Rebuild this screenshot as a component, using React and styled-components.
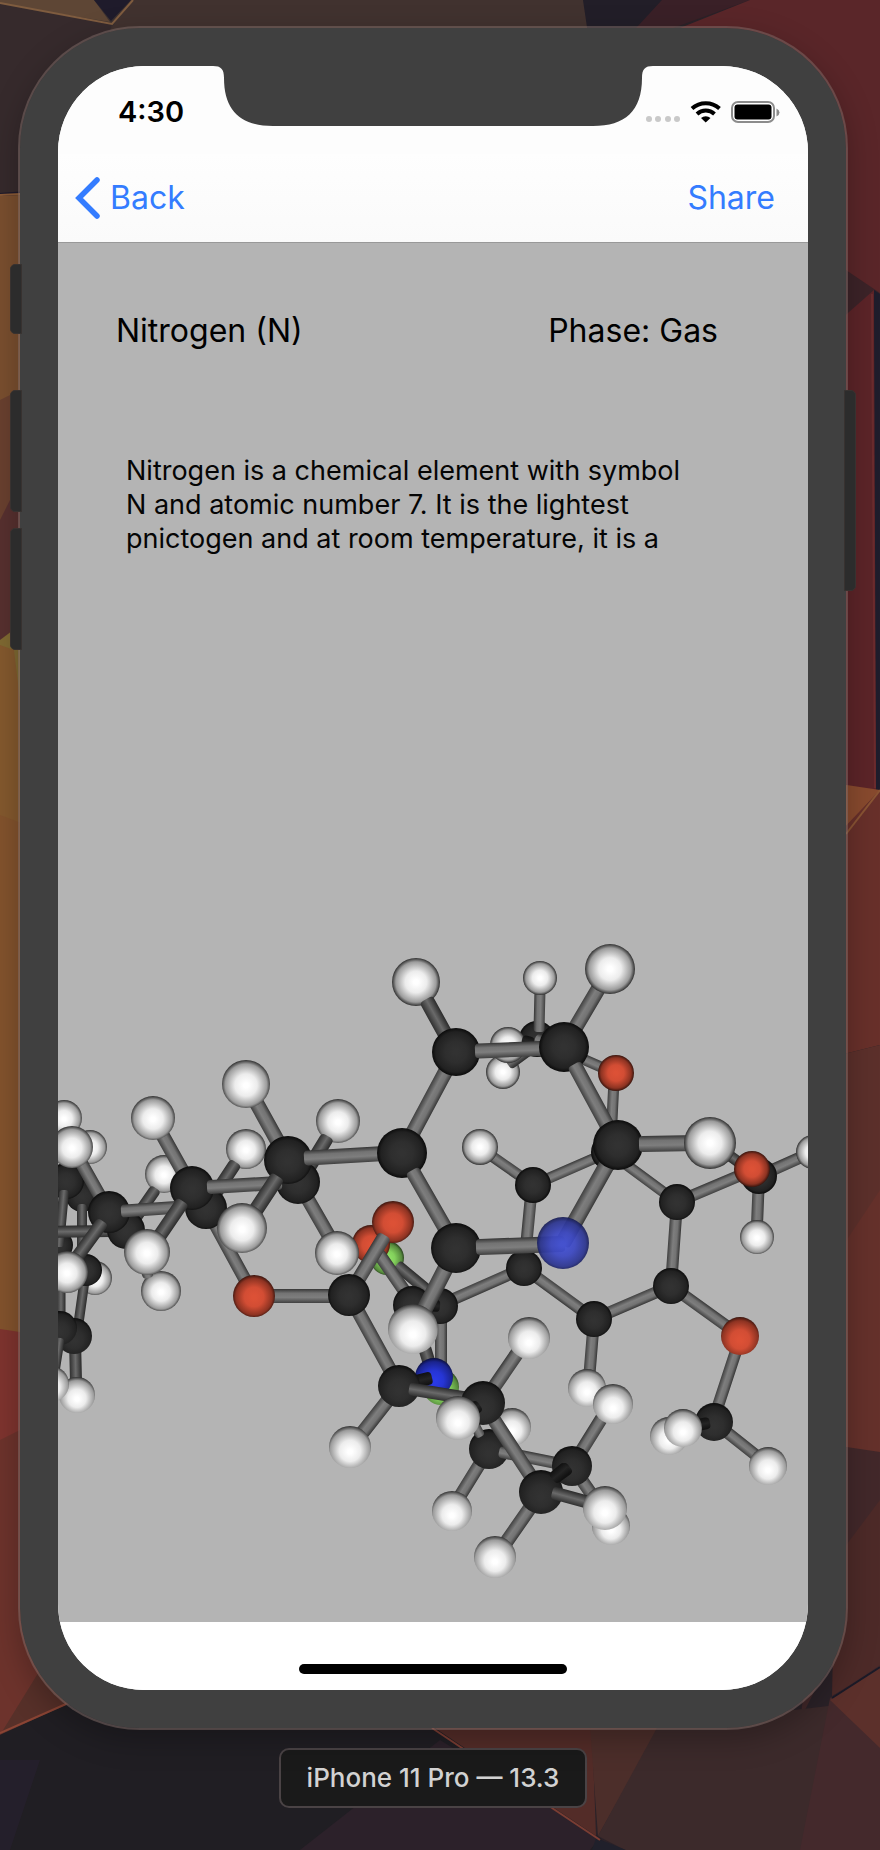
import React from "react";
import styled, { createGlobalStyle } from "styled-components";

const GlobalStyle = createGlobalStyle`
  *, *::before, *::after { box-sizing: border-box; }
  body {
    margin: 0;
    background: #2b2228;
    font-family: Inter, Roboto, "Liberation Sans", sans-serif;
  }
`;

const Desktop = styled.main`
  position: relative;
  min-height: 100vh;
  padding: 26px 32px 42px 18px;
  display: flex;
  flex-direction: column;
  align-items: center;
  gap: 18px;
`;

const Wallpaper = styled.svg`
  position: absolute;
  inset: 0;
  z-index: -1;
  width: 100%;
  height: 100%;
`;

const Phone = styled.section`
  position: relative;
  width: 100%;
  max-width: 830px;
  padding: 38px;
  border: 2px solid rgba(130, 110, 105, 0.5);
  border-radius: 122px;
  background: #404040;
  background-clip: padding-box;
  box-shadow: 0 10px 30px rgba(0, 0, 0, 0.25);
`;

const SideButton = styled.span`
  position: absolute;
  top: ${(p) => p.$top}px;
  ${(p) => p.$side}: -10px;
  width: 12px;
  height: ${(p) => p.$length}px;
  border: 1px solid #383230;
  border-radius: ${(p) => (p.$side === "left" ? "5px 0 0 5px" : "0 5px 5px 0")};
  background: #2c2c2c;
`;

const Screen = styled.div`
  overflow: hidden;
  border-radius: 86px;
  background: #ffffff;
`;

const StatusBar = styled.header`
  position: relative;
  height: 88px;
  padding: 4px 28px 0 60px;
  display: flex;
  align-items: center;
  justify-content: space-between;
  background: #fdfdfd;
`;

const Notch = styled.svg`
  position: absolute;
  top: 0;
  left: 50%;
  width: 440px;
  height: 60px;
  margin-left: -220px;
`;

const Clock = styled.time`
  font-size: 29px;
  line-height: 36px;
  font-weight: 600;
  color: #000000;
`;

const StatusIcons = styled.svg`
  width: 136px;
  height: 24px;
`;

const NavBar = styled.nav`
  height: 89px;
  padding: 0 33px 0 17px;
  display: flex;
  align-items: center;
  justify-content: space-between;
  border-bottom: 1px solid #999999;
  background: linear-gradient(#fefefe, #fafafa);
`;

const NavButton = styled.button`
  padding: 0;
  border: 0;
  display: flex;
  align-items: center;
  gap: 9px;
  background: none;
  color: #347cff;
  font: inherit;
  font-size: 32px;
  line-height: 40px;
  cursor: pointer;
`;

const Chevron = styled.svg`
  width: 26px;
  height: 44px;
`;

const Content = styled.article`
  padding-top: 68px;
  background: #b4b4b4;
`;

const Heading = styled.div`
  padding: 0 90px 0 58px;
  display: flex;
  justify-content: space-between;
`;

const Title = styled.h1`
  margin: 0;
  font-size: 32px;
  line-height: 40px;
  font-weight: 400;
  color: #000000;
`;

const Phase = styled.p`
  margin: 0;
  font-size: 32px;
  line-height: 40px;
  color: #000000;
`;

const Summary = styled.p`
  margin: 103px 60px 374px 68px;
  font-size: 27px;
  line-height: 34px;
  color: #050505;
`;

const Scene = styled.svg`
  display: block;
  width: 100%;
  height: auto;
`;

const HomeArea = styled.footer`
  height: 68px;
  padding-top: 42px;
  background: #ffffff;
`;

const HomeIndicator = styled.div`
  width: 268px;
  height: 10px;
  margin: 0 auto;
  border-radius: 5px;
  background: #000000;
`;

const DeviceLabel = styled.p`
  margin: 0;
  padding: 10px 26px;
  border: 2px solid #4a4345;
  border-radius: 10px;
  background: #1a1a1a;
  color: #d2d2d2;
  font-size: 26px;
  line-height: 36px;
  font-weight: 500;
`;

/* Facets of the low-poly wallpaper: fill and corner points. */
const FACETS = [
  ["#3c3130", "0,0 520,0 590,0 590,40 0,40"],
  ["#5e4635", "0,0 94,0 110,22 0,4"],
  ["#1f1b2b", "94,0 131,0 111,21"],
  ["#41322f", "131,0 583,0 588,30 110,30"],
  ["#221e28", "583,0 662,0 632,34 588,34"],
  ["#3a2027", "662,0 750,0 640,40 625,40"],
  ["#5a2629", "750,0 880,0 880,300 840,266 680,28"],
  ["#362a2c", "0,3 112,24 60,200 0,193"],
  ["#1f1a2b", "0,193 40,190 40,196 0,197"],
  ["#7a4f2f", "0,196 40,194 40,420 0,420"],
  ["#69402f", "0,400 40,380 40,560 0,560"],
  ["#57302f", "0,520 40,440 40,600 0,645"],
  ["#7f6932", "0,640 40,610 40,850 18,810 0,720"],
  ["#84592e", "0,645 14,650 20,700 40,860 0,820"],
  ["#83532d", "0,815 40,830 40,1340 0,1330"],
  ["#7f342f", "0,1329 40,1335 40,1560 0,1560"],
  ["#6d332c", "0,1440 40,1420 100,1680 0,1735"],
  ["#573029", "0,1735 40,1670 80,1700 64,1706"],
  ["#3c2328", "840,266 880,293 880,300 840,320"],
  ["#5c2428", "840,320 874,290 878,790 840,790"],
  ["#1f1d2c", "874,290 880,294 880,790 876,790"],
  ["#884a2e", "840,784 880,790 840,834"],
  ["#68302a", "840,832 880,790 880,1045 840,1055"],
  ["#5c302b", "840,1055 880,1045 880,1250 840,1250"],
  ["#65312b", "840,1250 880,1190 880,1460 840,1448"],
  ["#42282a", "840,1446 880,1452 880,1560 800,1720"],
  ["#4d2a28", "880,1500 880,1668 832,1696 835,1560"],
  ["#201e23", "0,1735 66,1705 435,1728 600,1838 610,1850 0,1850"],
  ["#2c212a", "300,1850 440,1740 600,1838 590,1850"],
  ["#241f2b", "0,1760 40,1760 10,1850 0,1850"],
  ["#532c28", "432,1726 592,1726 596,1836"],
  ["#4c2e2a", "590,1726 660,1726 598,1836"],
  ["#3c2a2b", "658,1726 880,1700 880,1850 625,1850 598,1836"],
  ["#44292c", "830,1698 880,1665 880,1850 800,1850"],
  ["#5c302b", "830,1700 880,1666 880,1748"],
  ["#20202b", "596,1838 626,1850 592,1850"],
];

const SEAMS = [
  ["#7f5c3f", "0,3 112,24 133,0"],
  ["#8a5a36", "0,195 20,194"],
  ["#6b2c2e", "872,294 875,788"],
  ["#8a5434", "846,834 880,790"],
  ["#8a4434", "0,1733 66,1704"],
  ["#7a3d33", "432,1728 600,1840"],
  ["#1b1a27", "832,1698 880,1667"],
];

/* Shading stops for each element, from the lit centre to the rim. */
const ELEMENTS = {
  H: ["#ffffff", "#ececec", "#9c9c9c", "#303030"],
  C: ["#323232", "#2e2e2e", "#212121", "#0b0b0b"],
  O: ["#dc5136", "#d24d34", "#8d3322", "#3a150e"],
  N: ["#2a3ae6", "#2635d4", "#1a248e", "#0b0f3a"],
  T: ["#414fd4", "#3c48c2", "#2c3590", "#171c50"],
  G: ["#90e266", "#83d05c", "#568a3d", "#243a1a"],
};

const BOND_FILLS = ["url(#bond)", "url(#bond-dark)", "url(#bond-unlit)"];

/* Painted in order, far to near.
   Atom: [element, x, y, radius].
   Bond: [0 light | 1 dark | 2 unlit, x1, y1, x2, y2, width]. */
const MODEL = [
  // methoxy group behind the upper ring
  ["C", 537, 1039, 18],
  [0, 539, 1030, 540, 990, 11],
  ["H", 540, 978, 17],
  [0, 537, 1039, 608, 1070, 11],
  ["H", 503, 1072, 17],
  [1, 532, 1048, 510, 1064, 11],
  ["H", 508, 1045, 18],
  [2, 532, 1042, 524, 1040, 10],
  [0, 614, 1080, 611, 1140, 11],
  ["O", 616, 1073, 18],
  // right ring
  [0, 533, 1185, 609, 1152, 11],
  [0, 609, 1152, 677, 1202, 11],
  [0, 677, 1202, 671, 1286, 12],
  [0, 671, 1286, 594, 1319, 12],
  [0, 594, 1319, 524, 1268, 12],
  [0, 524, 1268, 532, 1185, 12],
  [0, 524, 1268, 440, 1305, 12],
  [0, 533, 1185, 486, 1152, 11],
  ["H", 480, 1147, 18],
  [0, 671, 1286, 735, 1332, 12],
  [0, 677, 1202, 748, 1172, 12],
  [0, 594, 1319, 589, 1380, 12],
  ["C", 533, 1185, 18],
  ["C", 609, 1152, 18],
  ["C", 677, 1202, 18],
  ["C", 671, 1286, 18],
  ["C", 594, 1319, 18],
  ["C", 524, 1268, 18],
  ["H", 587, 1388, 19],
  // right methoxy groups
  [1, 755, 1174, 715, 1145, 11],
  [0, 759, 1176, 806, 1155, 12],
  [0, 759, 1176, 757, 1225, 12],
  ["C", 759, 1176, 18],
  ["H", 813, 1152, 17],
  ["H", 757, 1237, 17],
  ["O", 752, 1169, 18],
  [0, 738, 1345, 716, 1412, 12],
  ["O", 740, 1336, 19],
  [0, 714, 1422, 762, 1460, 12],
  ["H", 669, 1436, 19],
  ["C", 714, 1422, 19],
  [2, 708, 1423, 688, 1427, 12],
  ["H", 683, 1428, 19],
  ["H", 768, 1466, 19],
  // centre linker
  ["G", 387, 1258, 17],
  [1, 398, 1266, 440, 1301, 12],
  [0, 441, 1306, 441, 1372, 12],
  ["C", 440, 1306, 18],
  ["G", 441, 1387, 18],
  [2, 438, 1306, 414, 1304, 12],
  ["O", 371, 1244, 19],
  [0, 379, 1254, 412, 1302, 13],
  [1, 413, 1310, 432, 1372, 13],
  ["C", 412, 1305, 19],
  ["N", 434, 1377, 19],
  [2, 430, 1378, 406, 1384, 13],
  // lower ring
  ["H", 512, 1427, 19],
  [0, 489, 1449, 455, 1504, 13],
  ["C", 489, 1449, 20],
  [0, 501, 1452, 566, 1465, 12],
  [0, 480, 1435, 472, 1420, 10],
  ["H", 452, 1511, 20],
  [0, 572, 1466, 606, 1515, 13],
  ["H", 611, 1526, 19],
  [0, 572, 1466, 608, 1408, 13],
  ["C", 572, 1466, 20],
  ["H", 613, 1404, 20],
  [2, 568, 1468, 546, 1484, 13],
  [0, 399, 1386, 352, 1446, 14],
  [0, 349, 1295, 399, 1386, 14],
  [0, 483, 1403, 525, 1342, 14],
  ["H", 529, 1338, 21],
  [0, 483, 1403, 538, 1487, 14],
  ["C", 399, 1386, 21],
  ["H", 350, 1447, 21],
  [1, 411, 1389, 478, 1400, 13],
  ["C", 483, 1403, 22],
  [2, 478, 1406, 468, 1413, 13],
  ["H", 458, 1418, 22],
  [0, 541, 1492, 498, 1554, 14],
  ["C", 541, 1492, 22],
  [2, 566, 1468, 554, 1478, 13],
  ["H", 495, 1557, 21],
  [1, 554, 1493, 602, 1506, 13],
  ["H", 605, 1508, 22],
  // carbonyl
  [0, 254, 1296, 349, 1296, 14],
  ["O", 393, 1222, 21],
  [0, 349, 1295, 384, 1237, 14],
  ["C", 349, 1295, 21],
  // far left cluster
  ["H", 64, 1118, 18],
  ["H", 90, 1147, 17],
  ["C", 82, 1196, 16],
  [1, 82, 1206, 82, 1262, 10],
  ["H", 95, 1278, 17],
  [1, 86, 1270, 77, 1334, 10],
  ["C", 86, 1270, 16],
  ["C", 58, 1245, 15],
  [1, 61, 1285, 61, 1320, 9],
  ["C", 66, 1181, 18],
  [1, 64, 1192, 59, 1245, 10],
  [1, 75, 1340, 76, 1382, 12],
  ["H", 77, 1395, 18],
  ["C", 74, 1336, 18],
  ["C", 60, 1328, 17],
  [1, 60, 1340, 55, 1372, 9],
  ["H", 51, 1384, 18],
  [1, 40, 1232, 112, 1231, 12],
  // left chain, back row
  ["H", 164, 1174, 19],
  [1, 155, 1190, 130, 1226, 12],
  ["C", 126, 1230, 19],
  [0, 206, 1208, 254, 1296, 13],
  ["O", 254, 1296, 21],
  ["H", 161, 1291, 20],
  [0, 148, 1276, 146, 1268, 11],
  ["H", 246, 1149, 20],
  [1, 235, 1164, 206, 1208, 13],
  ["C", 206, 1208, 21],
  [0, 298, 1182, 337, 1250, 14],
  ["H", 337, 1253, 22],
  ["H", 338, 1121, 22],
  [1, 327, 1138, 300, 1182, 14],
  ["C", 298, 1182, 22],
  // left chain, front row
  [0, 74, 1150, 109, 1212, 13],
  ["H", 72, 1147, 21],
  ["C", 109, 1212, 21],
  [1, 102, 1223, 72, 1264, 13],
  ["H", 67, 1272, 21],
  [0, 123, 1211, 182, 1207, 13],
  [0, 153, 1118, 192, 1188, 14],
  ["H", 153, 1118, 22],
  ["C", 192, 1188, 22],
  [1, 182, 1203, 150, 1250, 14],
  ["H", 147, 1252, 23],
  [0, 209, 1187, 280, 1183, 14],
  [0, 246, 1084, 288, 1160, 15],
  ["H", 246, 1084, 24],
  ["C", 288, 1160, 24],
  [1, 277, 1178, 248, 1222, 15],
  ["H", 242, 1228, 25],
  [0, 306, 1158, 395, 1153, 15],
  // front ring
  [0, 456, 1052, 402, 1153, 15],
  ["H", 416, 982, 24],
  [1, 427, 1001, 454, 1050, 15],
  ["C", 402, 1153, 25],
  [0, 413, 1172, 452, 1240, 15],
  ["C", 456, 1052, 24],
  [0, 477, 1051, 556, 1048, 15],
  [0, 610, 969, 564, 1047, 15],
  ["H", 610, 969, 25],
  ["C", 564, 1047, 25],
  [0, 575, 1066, 614, 1138, 15],
  [0, 618, 1145, 563, 1243, 16],
  ["C", 618, 1145, 25],
  [0, 641, 1144, 700, 1143, 16],
  ["H", 710, 1143, 26],
  [0, 456, 1248, 418, 1322, 16],
  ["C", 456, 1248, 25],
  [0, 478, 1247, 563, 1244, 16],
  ["H", 413, 1329, 25],
  ["T", 563, 1243, 26],
];

function Shape({ item }) {
  if (typeof item[0] === "string") {
    const [element, cx, cy, r] = item;
    return (
      <circle
        cx={cx}
        cy={cy}
        r={r}
        fill={`url(#${cy > 1320 ? "low" : cy < 1200 && cx > 400 ? "top" : "mid"}-${element})`}
        opacity={element === "T" ? 0.93 : 1}
      />
    );
  }
  const [tone, x1, y1, x2, y2, width] = item;
  const length = Math.hypot(x2 - x1, y2 - y1);
  const angle = (Math.atan2(y2 - y1, x2 - x1) * 180) / Math.PI;
  return (
    <rect
      x={-2}
      y={-width / 2}
      width={length + 4}
      height={width}
      rx={4}
      fill={BOND_FILLS[tone]}
      transform={`translate(${x1} ${y1}) rotate(${angle})`}
    />
  );
}

function Molecule() {
  const lights = { top: 0.5, mid: 0.53, low: 0.62 };
  return (
    <Scene viewBox="58 930 750 692" role="img" aria-label="Ball and stick molecule">
      <defs>
        {Object.entries(lights).map(([level, fy]) =>
          Object.entries(ELEMENTS).map(([element, [lit, body, shade, rim]]) => (
            <radialGradient
              key={level + element}
              id={`${level}-${element}`}
              cx="0.5"
              cy={(fy + 0.5) / 2}
              r={0.5 + (fy - 0.5) / 2}
              fx="0.5"
              fy={fy}
            >
              <stop offset="0.1" stopColor={lit} />
              <stop offset="0.45" stopColor={body} />
              <stop offset="0.84" stopColor={shade} />
              <stop offset="1" stopColor={rim} />
            </radialGradient>
          ))
        )}
        <linearGradient id="bond" x1="0" y1="0" x2="0" y2="1">
          <stop offset="0" stopColor="#363636" />
          <stop offset="0.3" stopColor="#737373" />
          <stop offset="0.6" stopColor="#7e7e7e" />
          <stop offset="1" stopColor="#404040" />
        </linearGradient>
        <linearGradient id="bond-dark" x1="0" y1="0" x2="0" y2="1">
          <stop offset="0" stopColor="#2a2a2a" />
          <stop offset="0.5" stopColor="#6a6a6a" />
          <stop offset="1" stopColor="#303030" />
        </linearGradient>
        <linearGradient id="bond-unlit" x1="0" y1="0" x2="0" y2="1">
          <stop offset="0" stopColor="#101010" />
          <stop offset="0.5" stopColor="#242424" />
          <stop offset="1" stopColor="#101010" />
        </linearGradient>
      </defs>
      {MODEL.map((item, i) => (
        <Shape key={i} item={item} />
      ))}
    </Scene>
  );
}

export default function App() {
  return (
    <>
      <GlobalStyle />
      <Desktop>
        <Wallpaper viewBox="0 0 880 1850" preserveAspectRatio="none" aria-hidden="true">
          <rect width="880" height="1850" fill="#2b2228" />
          {FACETS.map(([fill, points], i) => (
            <polygon key={i} fill={fill} points={points} />
          ))}
          {SEAMS.map(([stroke, points], i) => (
            <polyline key={i} fill="none" stroke={stroke} strokeWidth="2" points={points} />
          ))}
        </Wallpaper>

        <Phone>
          <SideButton $side="left" $top={236} $length={70} />
          <SideButton $side="left" $top={362} $length={122} />
          <SideButton $side="left" $top={500} $length={122} />
          <SideButton $side="right" $top={362} $length={201} />

          <Screen>
            <StatusBar>
              <Notch viewBox="0 0 440 60" aria-hidden="true">
                <path
                  d="M0 0 C8 0 11 3 11 12 C11 45 28 60 60 60 H380 C412 60 429 45 429 12 C429 3 432 0 440 0 Z"
                  fill="#404040"
                />
              </Notch>
              <Clock>4:30</Clock>
              <StatusIcons viewBox="0 0 136 24" role="img" aria-label="Wi-Fi on, battery full">
                <g fill="#c9c9c9">
                  <circle cx="5" cy="19" r="3" />
                  <circle cx="14" cy="19" r="3" />
                  <circle cx="24" cy="19" r="3" />
                  <circle cx="33" cy="19" r="3" />
                </g>
                <g fill="none" stroke="#000000" strokeWidth="4">
                  <path d="M48 8.5 A20.5 20.5 0 0 1 75.500 8.5" />
                  <path d="M53 14 A13 13 0 0 1 70.500 14" />
                </g>
                <path d="M61.700 22.500 L57 18 A7 7 0 0 1 66.500 18 Z" fill="#000000" />
                <rect x="88" y="2" width="42" height="20" rx="6" fill="#ffffff" stroke="#8c8c8c" strokeWidth="2" />
                <rect x="90.500" y="4.500" width="37" height="15" rx="3" fill="#000000" />
                <path d="M132.500 8.500 Q135.500 10 135.500 12.500 Q135.500 15 132.500 16.500 Z" fill="#8c8c8c" />
              </StatusIcons>
            </StatusBar>

            <NavBar>
              <NavButton type="button">
                <Chevron viewBox="0 0 26 44" aria-hidden="true">
                  <path
                    d="M22 4 L4 22 L22 40"
                    fill="none"
                    stroke="currentColor"
                    strokeWidth="5.500"
                    strokeLinecap="round"
                  />
                </Chevron>
                Back
              </NavButton>
              <NavButton type="button">Share</NavButton>
            </NavBar>

            <Content>
              <Heading>
                <Title>Nitrogen (N)</Title>
                <Phase>Phase: Gas</Phase>
              </Heading>
              <Summary>
                Nitrogen is a chemical element with symbol
                <br />
                N and atomic number 7. It is the lightest
                <br />
                pnictogen and at room temperature, it is a
              </Summary>
              <Molecule />
            </Content>

            <HomeArea>
              <HomeIndicator />
            </HomeArea>
          </Screen>
        </Phone>

        <DeviceLabel>iPhone 11 Pro — 13.3</DeviceLabel>
      </Desktop>
    </>
  );
}
